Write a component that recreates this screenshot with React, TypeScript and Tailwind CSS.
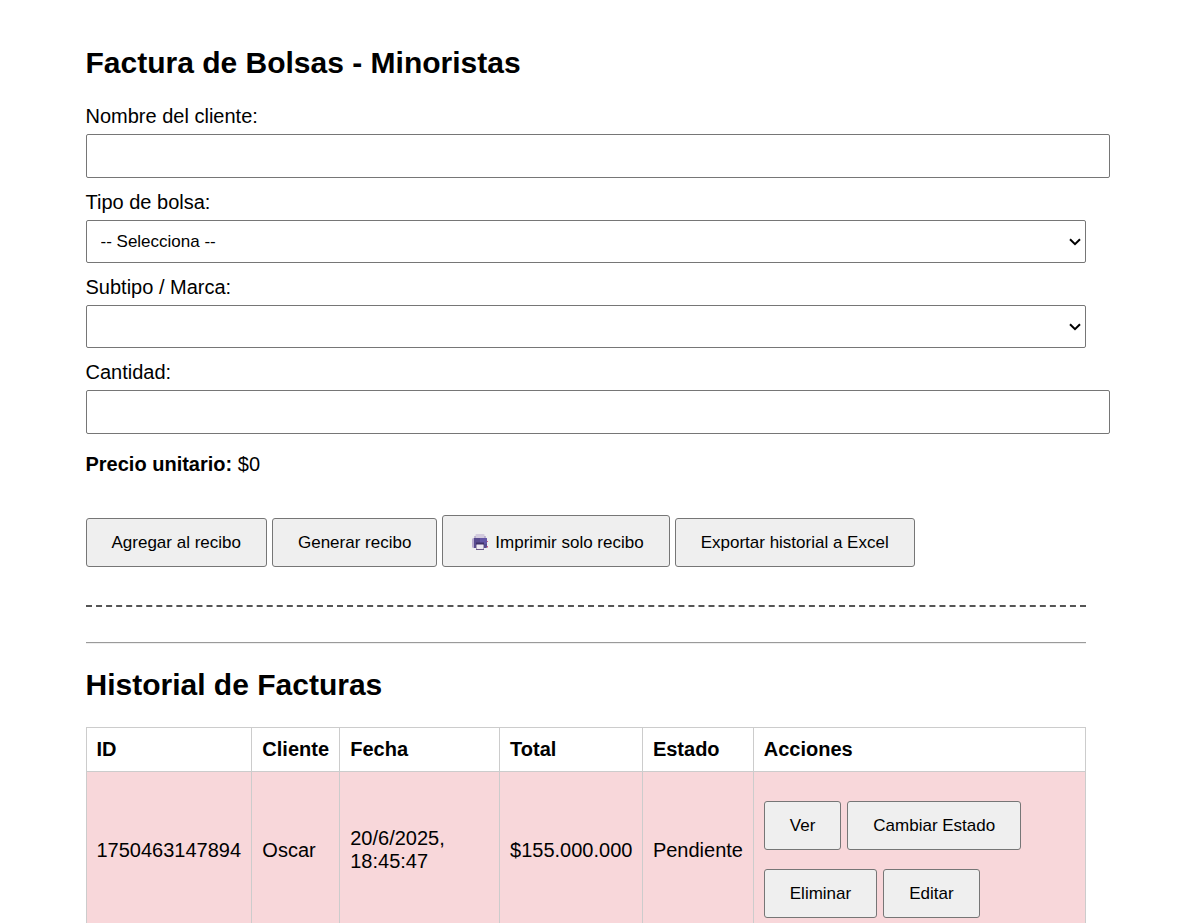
import type { ButtonHTMLAttributes, ReactNode } from "react";

const fieldBox =
  "block rounded-[2px] border border-[#767676] bg-white text-[17px] leading-6 text-black";

function Field({ id, label, children }: { id: string; label: string; children: ReactNode }) {
  return (
    <div>
      <label htmlFor={id} className="mb-[6px] block leading-6">
        {label}
      </label>
      {children}
    </div>
  );
}

function TextField({ id, label, type }: { id: string; label: string; type: string }) {
  return (
    <Field id={id} label={label}>
      <input
        id={id}
        type={type}
        className={`${fieldBox} h-11 w-[calc(100%+24px)] px-3`}
      />
    </Field>
  );
}

function SelectField({ id, label, options }: { id: string; label: string; options: string[] }) {
  return (
    <Field id={id} label={label}>
      <div className="relative">
        <select id={id} className={`${fieldBox} h-[43px] w-full appearance-none pr-8 pl-[14px]`}>
          {options.map((option) => (
            <option key={option}>{option}</option>
          ))}
        </select>
        <svg
          viewBox="0 0 12 8"
          className="pointer-events-none absolute top-[18px] right-[5px] h-2 w-3"
          fill="none"
          stroke="#000"
          strokeWidth="2"
          aria-hidden="true"
        >
          <path d="M1 1.2 6 6.2 11 1.2" />
        </svg>
      </div>
    </Field>
  );
}

function Button({
  className = "pt-3",
  children,
  ...rest
}: ButtonHTMLAttributes<HTMLButtonElement>) {
  return (
    <button
      type="button"
      className={`flex items-center rounded-[3px] border border-[#767676] bg-[#efefef] px-[25px] pb-3 text-[17px] leading-[23px] whitespace-nowrap text-black ${className}`}
      {...rest}
    >
      {children}
    </button>
  );
}

function PrinterIcon() {
  return (
    <svg viewBox="0 0 16 16" className="mr-[7px] mb-[2px] ml-1 h-4 w-4" aria-hidden="true">
      <rect x="3.5" y="0" width="9" height="5" rx="0.8" fill="#d3cbde" />
      <path d="M2.500 2h1v3h-1zM12.500 2h1v3h-1z" fill="#9486b4" />
      <path d="M0 5.500A1.500 1.500 0 0 1 1.500 4H3v10H1.500A1.500 1.500 0 0 1 0 12.500z" fill="#b9abcf" />
      <path d="M2 4h12a1 1 0 0 1 1 1v8a1 1 0 0 1-1 1H2z" fill="#584a8e" />
      <path d="M8 4h6a1 1 0 0 1 1 1v5H8z" fill="#6456a6" />
      <rect x="4" y="8.500" width="8" height="2.500" fill="#40306a" />
      <path d="M4 11h8v5H4z" fill="#6b5a86" />
      <path d="M4.500 10.500h7V15h-7z" fill="#eee9f2" />
      <path d="M15 7h1v1h-1zM15 12h1v1.500h-1z" fill="#d8557f" />
    </svg>
  );
}

const columns = [
  { title: "ID", width: "w-[16.6%]" },
  { title: "Cliente", width: "w-[8.8%]" },
  { title: "Fecha", width: "w-[16%]" },
  { title: "Total", width: "w-[14.3%]" },
  { title: "Estado", width: "w-[11.1%]" },
  { title: "Acciones", width: "w-[33.2%]" },
];

const invoices = [
  {
    id: "1750463147894",
    client: "Oscar",
    day: "20/6/2025,",
    time: "18:45:47",
    total: "$155.000.000",
    status: "Pendiente",
  },
];

const cell = "border border-[#ccc] px-[10px]";

export default function App() {
  return (
    <div className="min-h-screen bg-white pr-5 font-['Liberation_Sans',Arial,sans-serif] text-xl text-black">
      <main className="mx-auto max-w-[1000px] pt-[45px]">
        <h2 className="mb-[23px] text-[30px] leading-9 font-bold">Factura de Bolsas - Minoristas</h2>

        <form className="flex flex-col gap-3">
          <TextField id="cliente" label="Nombre del cliente:" type="text" />
          <SelectField id="tipo" label="Tipo de bolsa:" options={["-- Selecciona --"]} />
          <SelectField id="subtipo" label="Subtipo / Marca:" options={[]} />
          <TextField id="cantidad" label="Cantidad:" type="number" />
        </form>

        <p className="mt-[18px] leading-6">
          <strong className="font-bold">Precio unitario:</strong> $0
        </p>

        <div className="mt-[39px] flex flex-wrap items-end gap-[5px]">
          <Button>Agregar al recibo</Button>
          <Button>Generar recibo</Button>
          <Button className="pt-[15px]">
            <PrinterIcon />
            Imprimir solo recibo
          </Button>
          <Button>Exportar historial a Excel</Button>
        </div>

        <div className="mt-[38px] border-t-2 border-dashed border-[#555]" />
        <hr className="mt-[35px] h-[2px] border-t border-b border-t-[#9a9a9a] border-b-[#eee]" />

        <h2 className="mt-[23px] mb-6 text-[30px] leading-9 font-bold">Historial de Facturas</h2>

        <table className="w-full table-fixed border-collapse text-left">
          <thead>
            <tr>
              {columns.map((column) => (
                <th key={column.title} className={`${cell} ${column.width} py-[10px] leading-[23px] font-bold`}>
                  {column.title}
                </th>
              ))}
            </tr>
          </thead>
          <tbody>
            {invoices.map((invoice) => (
              <tr key={invoice.id} className="bg-[#f8d7da] leading-[23px]">
                <td className={cell}>{invoice.id}</td>
                <td className={cell}>{invoice.client}</td>
                <td className={cell}>
                  {invoice.day}
                  <br />
                  {invoice.time}
                </td>
                <td className={cell}>{invoice.total}</td>
                <td className={cell}>{invoice.status}</td>
                <td className={`${cell} pt-[29px] pb-[10px]`}>
                  <div className="flex flex-col gap-[19px]">
                    <div className="flex gap-[6px]">
                      <Button>Ver</Button>
                      <Button>Cambiar Estado</Button>
                    </div>
                    <div className="flex gap-[6px]">
                      <Button>Eliminar</Button>
                      <Button>Editar</Button>
                    </div>
                  </div>
                </td>
              </tr>
            ))}
          </tbody>
        </table>
      </main>
    </div>
  );
}
